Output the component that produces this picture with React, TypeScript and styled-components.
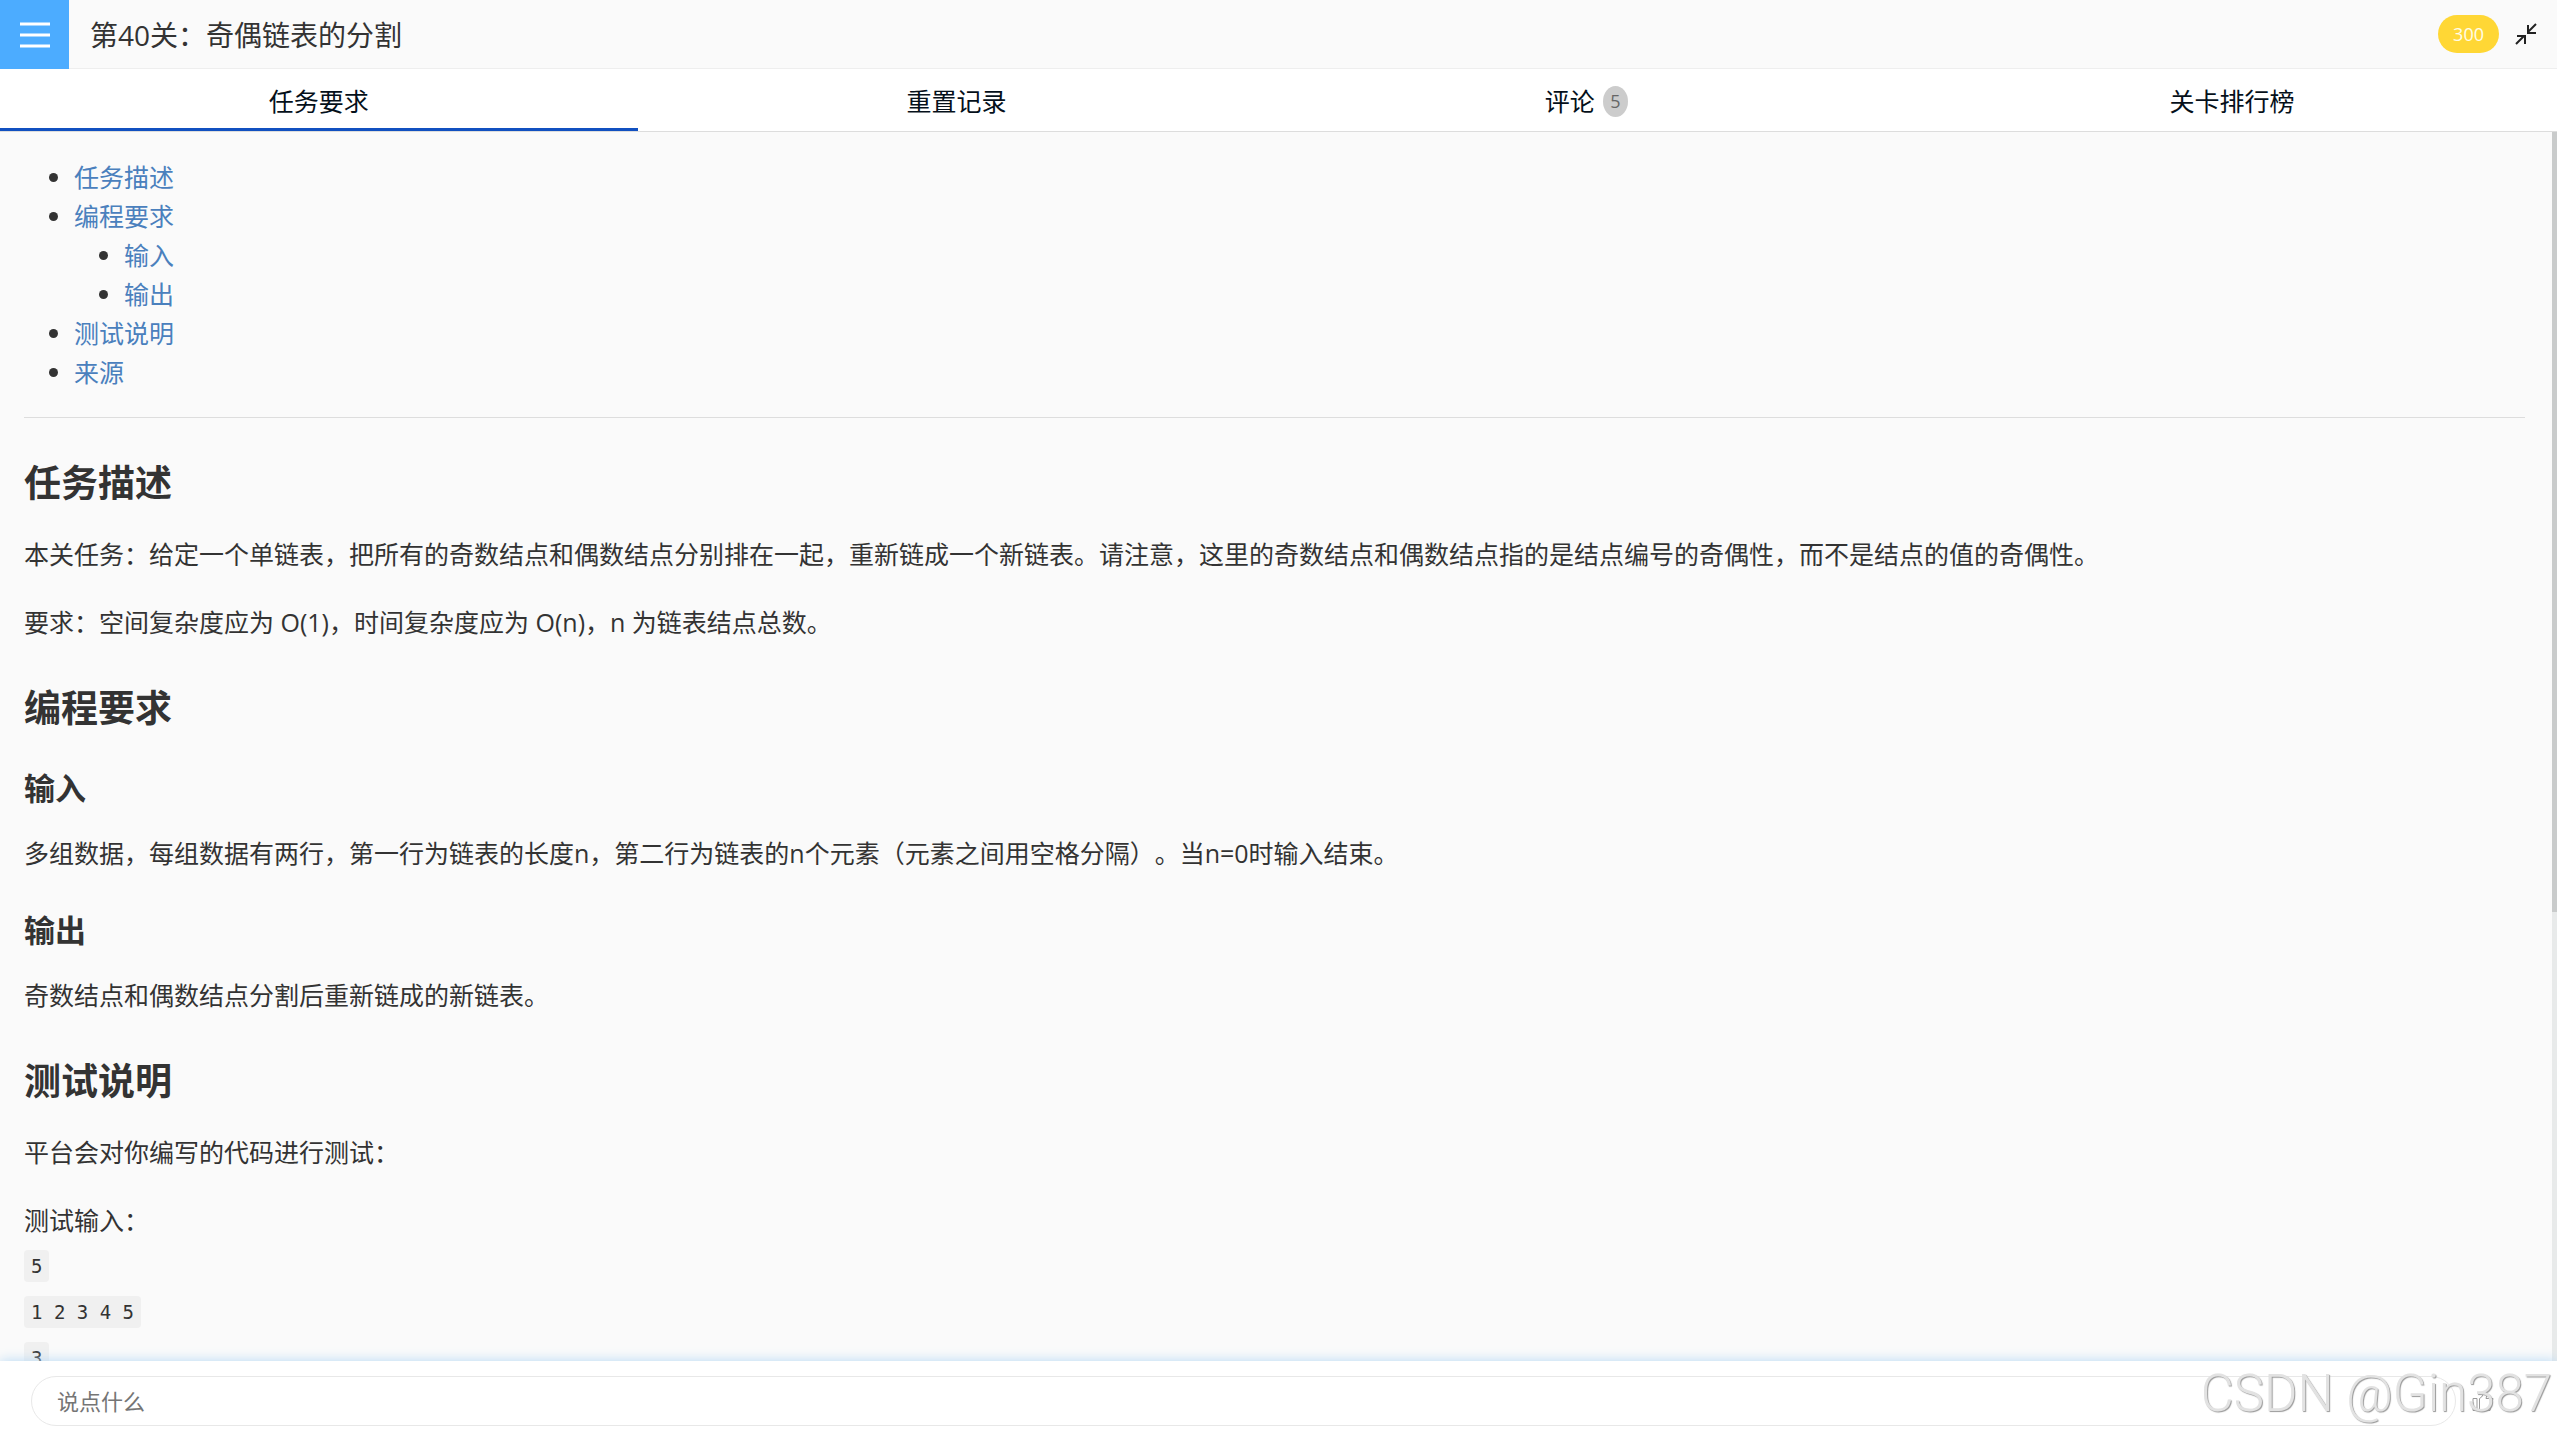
import React from "react";
import styled, { createGlobalStyle } from "styled-components";

const GlobalStyle = createGlobalStyle`
  *, *::before, *::after { box-sizing: border-box; }
  body {
    margin: 0;
    background: #fafafa;
    color: #333;
    font-family: "Open Sans", "Noto Sans CJK SC", sans-serif;
    font-size: 25px;
    line-height: 39px;
    text-spacing-trim: space-all;
  }
  button, input { font: inherit; color: inherit; }
`;

const Page = styled.div`
  position: relative;
  display: flex;
  flex-direction: column;
  height: 100vh;
  overflow: hidden;
`;

const Header = styled.header`
  display: flex;
  align-items: stretch;
  height: 69px;
  flex: none;
  border-bottom: 1px solid #eee;
`;

const MenuButton = styled.button`
  display: flex;
  align-items: center;
  justify-content: center;
  width: 69px;
  height: 69px;
  padding: 0;
  border: 0;
  background: #4cacff;
`;

const Title = styled.h1`
  flex: 1;
  margin: 0 0 0 21px;
  font-size: 28px;
  font-weight: 400;
  line-height: 70px;
`;

const HeaderTools = styled.div`
  display: flex;
  align-items: center;
  gap: 16px;
  padding-right: 20px;
`;

const Score = styled.span`
  padding: 0 15px;
  border-radius: 19px;
  background: #ffd735;
  color: #fffde8;
  font-size: 18px;
  line-height: 38px;
`;

const IconButton = styled.button`
  display: flex;
  padding: 0;
  border: 0;
  background: none;
`;

const Tabs = styled.nav`
  display: flex;
  flex: none;
  height: 63px;
  padding-right: 6px;
  background: #fff;
  border-bottom: 1px solid #ddd;
`;

const Tab = styled.button<{ $active?: boolean }>`
  display: flex;
  flex: 1 1 0;
  align-items: center;
  justify-content: center;
  gap: 8px;
  padding: 5px 0 0;
  border: 0;
  border-bottom: 3px solid ${(p) => (p.$active ? "#1150c0" : "transparent")};
  background: none;
  color: #05101a;
`;

const Badge = styled.span`
  width: 25px;
  margin-right: 16px;
  border-radius: 50%;
  background: #ccc;
  color: #666;
  font-size: 18px;
  line-height: 31px;
  text-align: center;
`;

const Body = styled.div`
  display: flex;
  flex: 1;
  min-height: 0;
`;

const Content = styled.main`
  display: flex;
  flex-direction: column;
  flex: 1;
  min-width: 0;
  overflow: hidden;
  padding: 26px 27px 0 24px;

  > * { flex: none; }
`;

const Rail = styled.div`
  width: 5px;
  background: #e8eaea;
`;

const Thumb = styled.div`
  height: 63.5%;
  background: #c9cbcb;
`;

const TocList = styled.ul`
  margin: 0;
  padding-left: 50px;
  list-style: disc;
`;

const TocLink = styled.a`
  color: #4a80bd;
  text-decoration: none;
`;

const Divider = styled.hr`
  width: 100%;
  margin: 25px 0 28px;
  border: 0;
  border-top: 1px solid #ddd;
`;

const Heading = styled.h2`
  margin: 16px 0 32px;
  font-size: 37px;
  line-height: 41px;
`;

const SubHeading = styled.h3`
  margin: 11px 0 29px;
  font-size: 31px;
  line-height: 34px;
`;

const Text = styled.p`
  margin: 0 0 29px;
`;

const SampleLabel = styled.p`
  margin: 0 0 10px;
`;

const SampleBlock = styled.div`
  display: flex;
  flex-direction: column;
  align-items: flex-start;
  gap: 14px;
`;

const Code = styled.code`
  padding: 0 7px;
  border-radius: 4px;
  background: #f0f0f0;
  font-family: "DejaVu Sans Mono", monospace;
  font-size: 19px;
  line-height: 32px;
  white-space: pre;
`;

const CommentBar = styled.footer`
  position: relative;
  display: flex;
  flex: none;
  align-items: center;
  gap: 16px;
  height: 76px;
  padding: 4px 63px 0 31px;
  background: #fff;
  box-shadow: 0 0 12px #b5d8f5;
`;

const CommentInput = styled.input`
  flex: 1;
  min-width: 0;
  height: 50px;
  padding: 0 25px;
  border: 1px solid #e8e8e8;
  border-radius: 25px;
  background: #fff;
  font-size: 22px;
  outline: none;

  &::placeholder { color: #757575; opacity: 1; }
`;

const Watermark = styled.div`
  position: absolute;
  right: 5px;
  bottom: 14px;
  color: #e2e2e2;
  font-family: Roboto, "Liberation Sans", sans-serif;
  font-size: 51px;
  font-weight: 300;
  line-height: 58px;
  text-shadow: 1px 1px 1px #999;
  pointer-events: none;
`;

interface TocItem {
  label: string;
  children?: TocItem[];
}

const toc: TocItem[] = [
  { label: "任务描述" },
  { label: "编程要求", children: [{ label: "输入" }, { label: "输出" }] },
  { label: "测试说明" },
  { label: "来源" },
];

function Toc({ items }: { items: TocItem[] }) {
  return (
    <TocList>
      {items.map((item) => (
        <li key={item.label}>
          <TocLink href={`#${item.label}`}>{item.label}</TocLink>
          {item.children && <Toc items={item.children} />}
        </li>
      ))}
    </TocList>
  );
}

export default function App() {
  return (
    <Page>
      <GlobalStyle />
      <Header>
        <MenuButton aria-label="菜单">
          <svg width="30" height="26" viewBox="0 0 30 26" stroke="#fff" strokeWidth="3">
            <path d="M0 2h30M0 13h30M0 24h30" />
          </svg>
        </MenuButton>
        <Title>第40关：奇偶链表的分割</Title>
        <HeaderTools>
          <Score>300</Score>
          <IconButton aria-label="退出全屏">
            <svg width="22" height="22" viewBox="0 0 22 22" fill="none" stroke="#222" strokeWidth="2">
              <path d="M21 1 13 9M13 2v8h8M1 21 9 13M2 13h8v8" />
            </svg>
          </IconButton>
        </HeaderTools>
      </Header>
      <Tabs>
        <Tab $active>任务要求</Tab>
        <Tab>重置记录</Tab>
        <Tab>评论<Badge>5</Badge></Tab>
        <Tab>关卡排行榜</Tab>
      </Tabs>
      <Body>
        <Content>
          <Toc items={toc} />
          <Divider />
          <Heading id="任务描述">任务描述</Heading>
          <Text>本关任务：给定一个单链表，把所有的奇数结点和偶数结点分别排在一起，重新链成一个新链表。请注意，这里的奇数结点和偶数结点指的是结点编号的奇偶性，而不是结点的值的奇偶性。</Text>
          <Text>要求：空间复杂度应为 O(1)，时间复杂度应为 O(n)，n 为链表结点总数。</Text>
          <Heading id="编程要求">编程要求</Heading>
          <SubHeading id="输入">输入</SubHeading>
          <Text>多组数据，每组数据有两行，第一行为链表的长度n，第二行为链表的n个元素（元素之间用空格分隔）。当n=0时输入结束。</Text>
          <SubHeading id="输出">输出</SubHeading>
          <Text>奇数结点和偶数结点分割后重新链成的新链表。</Text>
          <Heading id="测试说明">测试说明</Heading>
          <Text>平台会对你编写的代码进行测试：</Text>
          <SampleLabel>测试输入：</SampleLabel>
          <SampleBlock>
            <Code>5</Code>
            <Code>1 2 3 4 5</Code>
            <Code>3</Code>
          </SampleBlock>
        </Content>
        <Rail>
          <Thumb />
        </Rail>
      </Body>
      <CommentBar>
        <CommentInput type="text" aria-label="评论" placeholder="说点什么" />
        <IconButton aria-label="点赞">
          <svg width="22" height="22" viewBox="0 0 22 22" fill="none" stroke="#999" strokeWidth="1">
            <path d="M1 8.500h4v12H1zM7.500 8.500v12h10.500l3-12h-7q2-6-1-7q-2 0-2 3q-1 3-3.500 4z" />
          </svg>
        </IconButton>
      </CommentBar>
      <Watermark>CSDN @Gin387</Watermark>
    </Page>
  );
}
